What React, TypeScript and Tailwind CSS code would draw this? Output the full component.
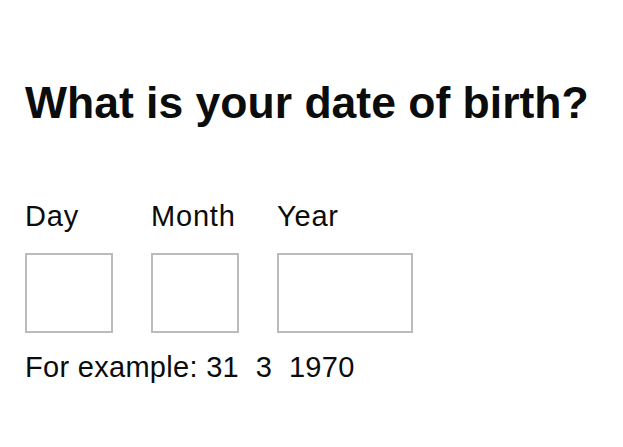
export default function App() {
  const fields = [
    { label: "Day", w: "w-[88px]" },
    { label: "Month", w: "w-[88px]" },
    { label: "Year", w: "w-[136px]" },
  ]

  return (
    <div className="min-h-[447px] bg-white px-[25px] pt-[78px] text-[#0b0c0c] font-['Liberation_Sans',Arial,sans-serif]">
      <h1 className="text-[44.5px] font-bold leading-[49px]">What is your date of birth?</h1>

      <div className="mt-[73px] flex gap-[38px]">
        {fields.map((f) => (
          <div key={f.label} className="flex flex-col">
            <label className="text-[29px] leading-[32px] tracking-[0.8px]">{f.label}</label>
            <input className={`mt-[21px] h-[80px] ${f.w} border-2 border-[#bbbbbb] bg-white outline-none`} />
          </div>
        ))}
      </div>

      <p className="mt-[16px] text-[29px] leading-[36px] tracking-[0.3px]">For example: 31&nbsp; 3&nbsp; 1970</p>
    </div>
  )
}
